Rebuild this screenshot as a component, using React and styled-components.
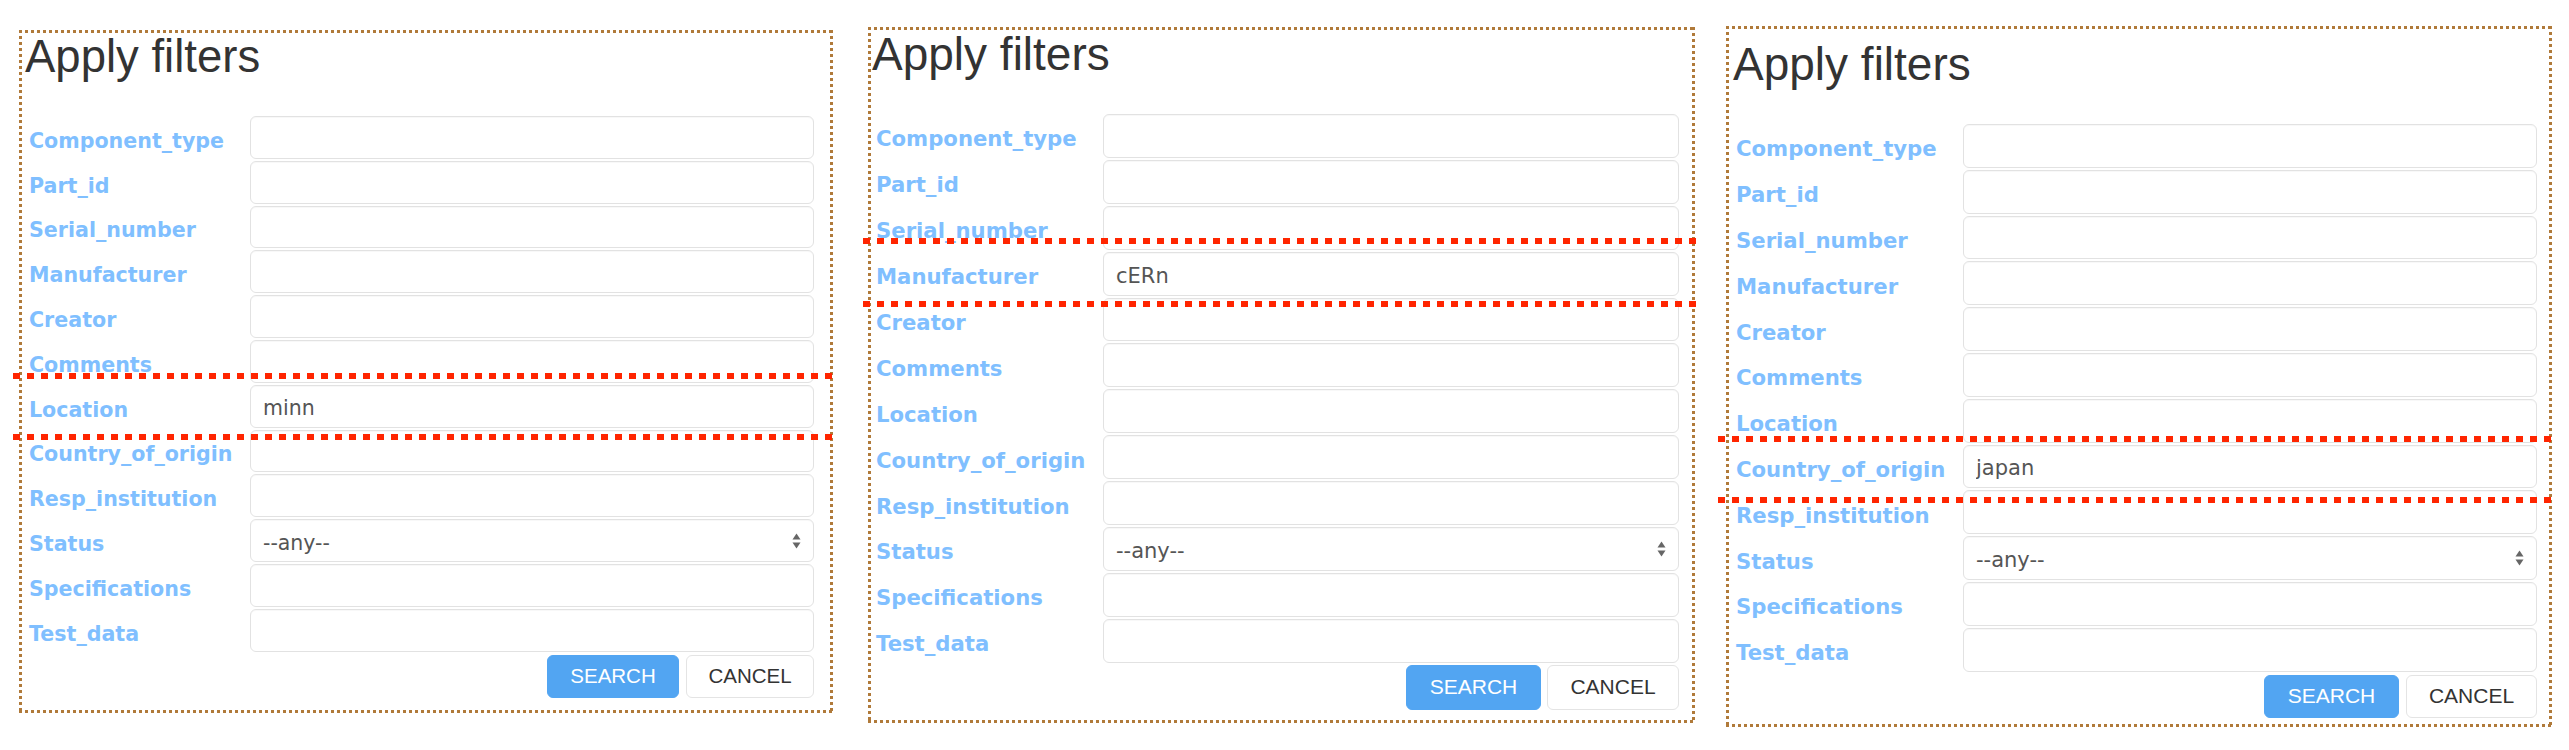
import React from 'react';
import styled, { createGlobalStyle } from 'styled-components';

const Global = createGlobalStyle`
  html, body { margin: 0; padding: 0; background: #fff; }
  body { width: 2569px; height: 750px; overflow: hidden; }
  * { box-sizing: border-box; }
`;

const Page = styled.div`
  display: flex;
  align-items: flex-start;
  width: 2569px;
  height: 750px;
`;

const DOT = '#b07a3a';

const Panel = styled.section`
  position: relative;
  flex: none;
  display: flex;
  flex-direction: column;
  width: ${(p) => p.$c.w}px;
  height: ${(p) => p.$c.h}px;
  margin-left: ${(p) => p.$c.x}px;
  margin-top: ${(p) => p.$c.y}px;
  padding-right: ${(p) => p.$c.pr}px;
  border: 3px solid transparent;
  background:
    repeating-linear-gradient(90deg, ${DOT} 0 3px, transparent 3px 6px) left top / 100% 3px no-repeat border-box,
    repeating-linear-gradient(90deg, ${DOT} 0 3px, transparent 3px 6px) left bottom / 100% 3px no-repeat border-box,
    repeating-linear-gradient(180deg, ${DOT} 0 3px, transparent 3px 6px) left top / 3px 100% no-repeat border-box,
    repeating-linear-gradient(180deg, ${DOT} 0 3px, transparent 3px 6px) right top / 3px 100% no-repeat border-box,
    #fff;
`;

const Title = styled.h2`
  margin: ${(p) => p.$c.tmt}px 0 0 0;
  padding-left: ${(p) => p.$c.tpl}px;
  height: ${(p) => p.$c.tfs}px;
  font-family: "Liberation Sans", Arial, sans-serif;
  font-weight: 400;
  font-size: ${(p) => p.$c.tfs}px;
  line-height: 1;
  color: #333;
`;

const Form = styled.form`
  display: flex;
  flex-direction: column;
  margin: ${(p) => p.$c.fgap}px 0 0 0;
`;

const Row = styled.div`
  display: grid;
  grid-template-columns: ${(p) => p.$c.lw}px 1fr;
  height: ${(p) => p.$c.pitch}px;
`;

const Label = styled.label`
  padding: ${(p) => p.$c.lpt}px 0 0 ${(p) => p.$c.lpl}px;
  font-family: "DejaVu Sans", Verdana, sans-serif;
  font-weight: 700;
  font-size: ${(p) => p.$c.lfs}px;
  line-height: 24px;
  color: #80bfff;
  white-space: nowrap;
`;

const FieldBox = styled.div`
  position: relative;
  height: ${(p) => p.$c.pitch - 2}px;
`;

const Field = styled.input`
  display: block;
  width: 100%;
  height: 100%;
  margin: 0;
  padding: 4px 12px 0;
  border: 1.5px solid #e2e2e2;
  border-radius: 6px;
  box-shadow: inset 0 1px 1px rgba(0, 0, 0, 0.03);
  background: #fff;
  font-family: "DejaVu Sans", Verdana, sans-serif;
  font-size: ${(p) => p.$c.ifs}px;
  color: #555;
  outline: none;
  appearance: none;
`;

const SelectArrows = styled.svg`
  position: absolute;
  right: 13px;
  top: 50%;
  transform: translateY(-50%);
  pointer-events: none;
`;

const Actions = styled.div`
  display: flex;
  justify-content: flex-end;
  gap: ${(p) => p.$c.bgap}px;
  margin-top: ${(p) => p.$c.bmt}px;
`;

const Button = styled.button`
  width: ${(p) => p.$w}px;
  height: ${(p) => p.$c.bh}px;
  margin: 0;
  padding: 0;
  border-radius: 6px;
  font-family: "Liberation Sans", Arial, sans-serif;
  font-size: ${(p) => p.$c.bfs}px;
  border: 1.5px solid ${(p) => (p.$primary ? '#52a5f2' : '#e4e4e4')};
  background: ${(p) => (p.$primary ? '#52a5f2' : '#fff')};
  color: ${(p) => (p.$primary ? '#fff' : '#333')};
`;

const Marker = styled.div`
  position: absolute;
  height: 6px;
  left: ${(p) => p.$left}px;
  width: ${(p) => p.$width}px;
  top: ${(p) => p.$top}px;
  background: repeating-linear-gradient(90deg, #ff2500 0 7px, transparent 7px 14px);
`;

const FIELDS = [
  'Component_type',
  'Part_id',
  'Serial_number',
  'Manufacturer',
  'Creator',
  'Comments',
  'Location',
  'Country_of_origin',
  'Resp_institution',
  'Status',
  'Specifications',
  'Test_data',
];

const PANELS = [
  {
    x: 19, y: 30, w: 814, h: 683, pr: 16,
    tmt: 1, tpl: 3, tfs: 45.5, fgap: 36.5,
    pitch: 44.8, lw: 228, lpl: 7, lfs: 20.6, lpt: 12.9, ifs: 20.5,
    bmt: 1.4, bh: 43, sw: 132, cw: 128, bgap: 7, bfs: 20.5,
    values: { Location: 'minn' },
    markers: { left: -9, width: 823, tops: [340, 401] },
  },
  {
    x: 35, y: 27, w: 827, h: 696, pr: 13,
    tmt: 1, tpl: 1, tfs: 46, fgap: 37,
    pitch: 45.9, lw: 232, lpl: 5, lfs: 21.2, lpt: 13.4, ifs: 21,
    bmt: 0, bh: 45, sw: 135, cw: 132, bgap: 6, bfs: 21,
    values: { Manufacturer: 'cERn' },
    markers: { left: -8, width: 836, tops: [208, 270.5] },
  },
  {
    x: 31, y: 26, w: 826, h: 701, pr: 12,
    tmt: 12, tpl: 4, tfs: 46, fgap: 37,
    pitch: 45.8, lw: 234, lpl: 7, lfs: 21.2, lpt: 13.4, ifs: 21,
    bmt: 1.4, bh: 43, sw: 135, cw: 131, bgap: 7, bfs: 21,
    values: { Country_of_origin: 'japan' },
    markers: { left: -11, width: 835, tops: [407, 467.5] },
  },
];

function FilterPanel({ c }) {
  return (
    <Panel $c={c}>
      <Title $c={c}>Apply filters</Title>
      <Form $c={c} onSubmit={(e) => e.preventDefault()}>
        {FIELDS.map((name) => (
          <Row key={name} $c={c}>
            <Label $c={c}>{name}</Label>
            <FieldBox $c={c}>
              {name === 'Status' ? (
                <>
                  <Field as="select" $c={c} defaultValue="any">
                    <option value="any">--any--</option>
                  </Field>
                  <SelectArrows width="9" height="16" viewBox="0 0 9 16">
                    <path d="M0.5 6.5 L4.5 0.5 L8.5 6.5 Z" fill="#666" />
                    <path d="M0.5 9.5 L8.5 9.5 L4.5 15.5 Z" fill="#666" />
                  </SelectArrows>
                </>
              ) : (
                <Field $c={c} type="text" defaultValue={c.values[name] || ''} />
              )}
            </FieldBox>
          </Row>
        ))}
        <Actions $c={c}>
          <Button $c={c} $w={c.sw} $primary type="submit">SEARCH</Button>
          <Button $c={c} $w={c.cw} type="button">CANCEL</Button>
        </Actions>
      </Form>
      {c.markers.tops.map((t) => (
        <Marker key={t} $top={t} $left={c.markers.left} $width={c.markers.width} />
      ))}
    </Panel>
  );
}

export default function App() {
  return (
    <>
      <Global />
      <Page>
        {PANELS.map((c, i) => (
          <FilterPanel key={i} c={c} />
        ))}
      </Page>
    </>
  );
}
